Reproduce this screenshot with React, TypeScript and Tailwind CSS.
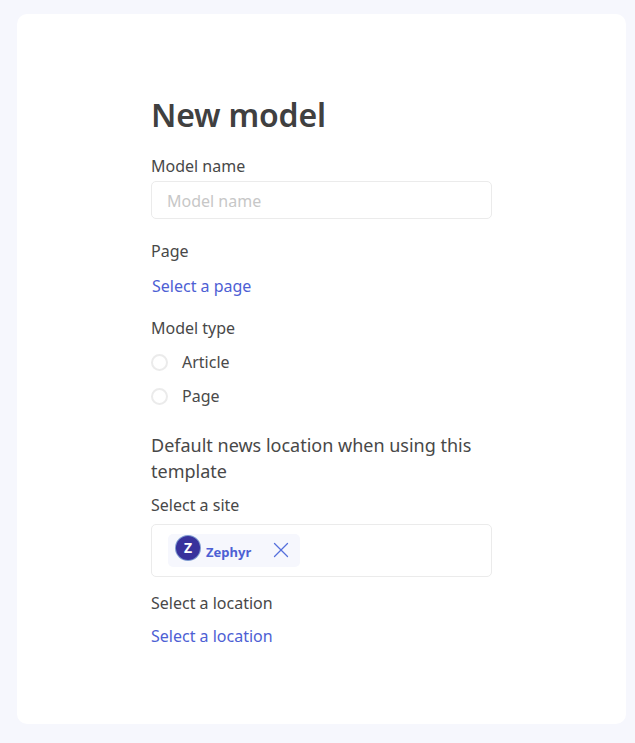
import { X } from "lucide-react";

function Radio({ label }: { label: string }) {
  return (
    <label className="flex h-[34px] items-center">
      <span className="h-[17px] w-[17px] rounded-full border-2 border-[#ebebeb] bg-white" />
      <span className="ml-[14px] text-[16px] text-[#4a4a4a]">{label}</span>
    </label>
  );
}

export default function App() {
  return (
    <div className="min-h-[743px] bg-[#f6f7fd] px-[17px] pt-[14px] pb-[19px] font-['Noto_Sans','Open_Sans',sans-serif]">
      <div className="h-[710px] w-[609px] rounded-[10px] bg-white pt-[79px] pl-[134px]">
        <div className="w-[341px]">
          <h1 className="text-[32px] leading-[44px] font-semibold tracking-[-0.2px] text-[#404040]">New model</h1>

          <label className="mt-[18px] block text-[16px] leading-[22px] text-[#484848]">Model name</label>
          <input
            placeholder="Model name"
            className="mt-[4px] block h-[38px] w-full rounded-[5px] border border-[#ebebeb] px-[15px] pt-[2px] text-[16px] outline-none placeholder:text-[#c7c7c7]"
          />

          <p className="mt-[21px] text-[16px] leading-[22px] text-[#484848]">Page</p>
          <a className="mt-[13px] ml-px block text-[16px] leading-[22px] text-[#4d60d4]">Select a page</a>

          <p className="mt-[20px] text-[16px] leading-[22px] text-[#484848]">Model type</p>
          <div className="mt-[6px]">
            <Radio label="Article" />
            <Radio label="Page" />
          </div>

          <h2 className="mt-[19px] text-[18px] leading-[26px] text-[#484848]">
            Default news location when using this template
          </h2>
          <p className="mt-[10px] text-[16px] leading-[22px] text-[#484848]">Select a site</p>
          <div className="mt-[8px] flex h-[53px] items-center rounded-[5px] border border-[#ebebeb] pl-[16px]">
            <div className="flex h-[33px] items-start rounded-[5px] bg-[#f6f7fd] pl-[8px] pr-[6px] pt-[2px]">
              <span className="flex h-6 w-6 items-center justify-center rounded-full bg-[#38329c] text-[14px] font-bold leading-none text-white ring-1 ring-[#7d9ad0]">
                Z
              </span>
              <span className="ml-[6px] mt-[7px] text-[13px] font-bold text-[#4d60d4]">Zephyr</span>
              <X className="ml-[17px] mt-[1px] h-[26px] w-[26px] text-[#5570dc]" strokeWidth={1.2} />
            </div>
          </div>

          <p className="mt-[15px] text-[16px] leading-[22px] text-[#484848]">Select a location</p>
          <a className="mt-[11px] block text-[16px] leading-[22px] text-[#4d60d4]">Select a location</a>
        </div>
      </div>
    </div>
  );
}
